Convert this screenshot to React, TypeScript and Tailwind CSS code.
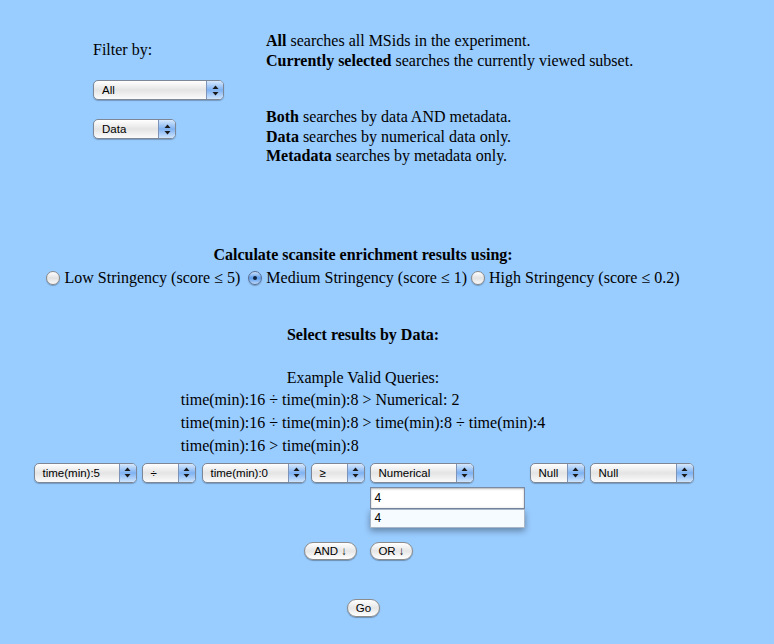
import React from 'react'

const SANS = "font-['Lucida_Grande','Liberation_Sans',sans-serif]"

function Arrows() {
  return (
    <svg width="7" height="11" viewBox="0 0 7 11" aria-hidden="true">
      <path d="M3.5 0.5 L6.5 4 L0.5 4 Z" fill="#1a1a1a" />
      <path d="M0.5 7 L6.5 7 L3.5 10.5 Z" fill="#1a1a1a" />
    </svg>
  )
}

function Select({ label, className }: { label: string; className: string }) {
  return (
    <div
      className={`${className} h-[20px] shrink-0 flex rounded-[5px] border border-[#7d8796] overflow-hidden shadow-[0_1px_1px_rgba(0,0,0,0.25)] bg-gradient-to-b from-white via-[#e4e4e4] to-[#fbfbfb]`}
    >
      <span className={`flex-1 pl-[8px] text-[11.5px] leading-[19px] text-black whitespace-nowrap ${SANS}`}>{label}</span>
      <span className="w-[17px] border-l border-[#7d94b8] bg-gradient-to-b from-[#d6e8fd] via-[#7fb2f2] to-[#cfe5fd] flex items-center justify-center">
        <Arrows />
      </span>
    </div>
  )
}

function Radio({ checked }: { checked?: boolean }) {
  return checked ? (
    <span className="relative inline-block w-[14px] h-[14px] rounded-full border border-[#5a6f92] bg-gradient-to-b from-[#c7defb] via-[#5d9ceb] to-[#b9d8fb] align-[-2px] shadow-[0_1px_1px_rgba(0,0,0,0.25)]">
      <span className="absolute left-[4px] top-[4px] w-[4px] h-[4px] rounded-full bg-[#10233f]" />
    </span>
  ) : (
    <span className="inline-block w-[14px] h-[14px] rounded-full border border-[#8a8a8a] bg-gradient-to-b from-white via-[#e2e2e2] to-[#fafafa] align-[-2px] shadow-[0_1px_1px_rgba(0,0,0,0.25)]" />
  )
}

function Button({ children, className }: { children: React.ReactNode; className: string }) {
  return (
    <button
      className={`${className} h-[18px] rounded-full border border-[#8c8c8c] bg-gradient-to-b from-white via-[#e6e6e6] to-white shadow-[0_1px_1px_rgba(0,0,0,0.3)] text-[11.5px] leading-[16px] text-black ${SANS}`}
    >
      {children}
    </button>
  )
}

export default function App() {
  return (
    <div className="min-h-[644px] w-[774px] bg-[#99ccff] text-black text-[16px] font-['Liberation_Serif',serif]">
      <div className="w-[726px]">
        {/* Filter section */}
        <div className="flex">
          <div className="w-[266px] pl-[93px] pt-[40px] leading-[19px]">
            <div>Filter by:</div>
            <Select label="All" className="w-[131px] mt-[21px]" />
            <Select label="Data" className="w-[83px] mt-[19px]" />
          </div>
          <div className="pt-[31px] leading-[19.5px]">
            <div><b>All</b> searches all MSids in the experiment.</div>
            <div><b>Currently selected</b> searches the currently viewed subset.</div>
            <div className="mt-[37px]"><b>Both</b> searches by data AND metadata.</div>
            <div><b>Data</b> searches by numerical data only.</div>
            <div><b>Metadata</b> searches by metadata only.</div>
          </div>
        </div>

        {/* Stringency */}
        <div className="mt-[79px] text-center leading-[19px]">
          <div className="font-bold">Calculate scansite enrichment results using:</div>
          <div className="mt-[4px] whitespace-nowrap">
            <Radio /> Low Stringency (score ≤ 5)&nbsp; <Radio checked /> Medium Stringency (score ≤ 1)&nbsp;
            <Radio /> High Stringency (score ≤ 0.2)
          </div>
        </div>

        {/* Data query */}
        <div className="mt-[38px] text-center leading-[19px]">
          <div className="font-bold">Select results by Data:</div>
          <div className="mt-[24px]">Example Valid Queries:</div>
          <div className="inline-block text-left leading-[23px] mt-[1px]">
            <div>time(min):16 ÷ time(min):8 &gt; Numerical: 2</div>
            <div>time(min):16 ÷ time(min):8 &gt; time(min):8 ÷ time(min):4</div>
            <div>time(min):16 &gt; time(min):8</div>
          </div>
        </div>

        <div className="mt-[6px] flex justify-center items-start gap-[5px] pl-[1px]">
          <Select label="time(min):5" className="w-[103px]" />
          <Select label="÷" className="w-[54px]" />
          <Select label="time(min):0" className="w-[104px] ml-[1px]" />
          <Select label="≥" className="w-[54px]" />
          <div className="w-[155px] relative">
            <Select label="Numerical" className="w-[104px]" />
            <div className="mt-[4px] h-[22px] border border-[#7a8aa3] bg-white shadow-[inset_0_1px_2px_rgba(0,0,0,0.3)]">
              <span className={`block pl-[4px] text-[12px] leading-[20px] ${SANS}`}>4</span>
            </div>
            <div className="absolute left-0 top-[46px] w-[155px] h-[19px] bg-[#f6fbff] border border-[#a9b6c8] shadow-[0_3px_6px_rgba(0,0,0,0.35)]">
              <span className={`block pl-[4px] text-[12px] leading-[17px] ${SANS}`}>4</span>
            </div>
          </div>
          <Select label="Null" className="w-[55px]" />
          <Select label="Null" className="w-[104px]" />
        </div>

        <div className="mt-[33px] flex justify-center gap-[13px] pr-[9px]">
          <Button className="w-[53px]">AND ↓</Button>
          <Button className="w-[43px]">OR ↓</Button>
        </div>

        <div className="mt-[39px] flex justify-center pl-[1px]">
          <Button className="w-[33px]">Go</Button>
        </div>
      </div>
    </div>
  )
}
